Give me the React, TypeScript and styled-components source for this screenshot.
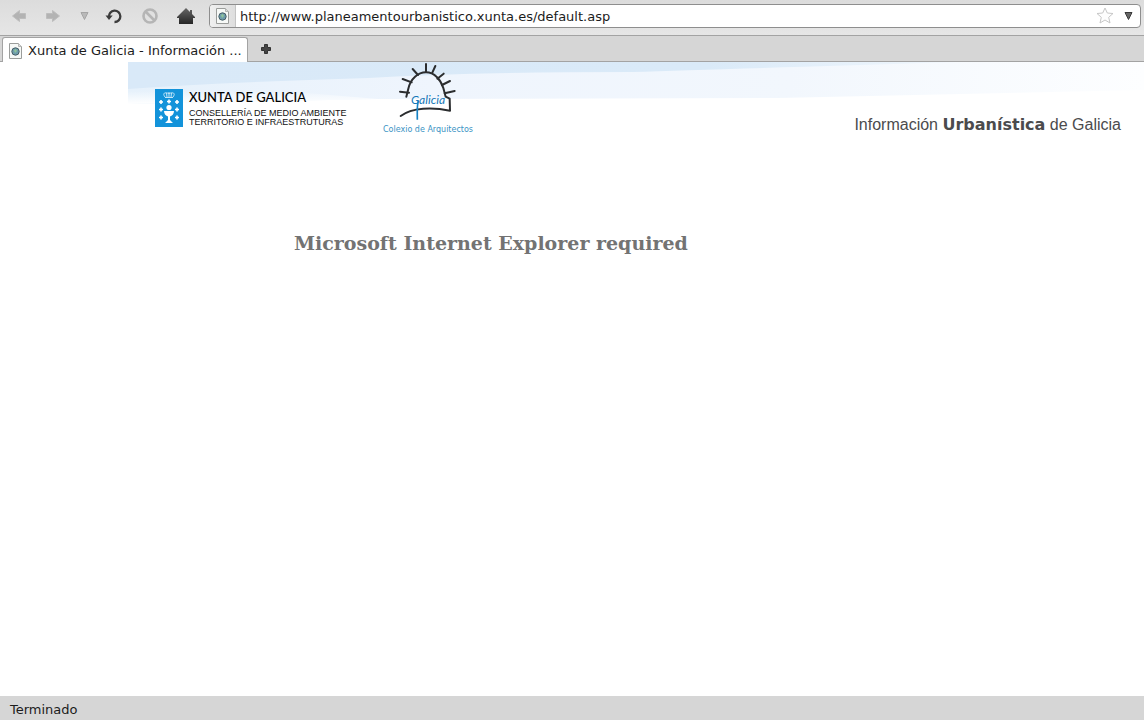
import React from 'react';
import styled, { createGlobalStyle } from 'styled-components';

const uiFont = `"DejaVu Sans", sans-serif`;

const GlobalStyle = createGlobalStyle`
  * { box-sizing: border-box; }
  body { margin: 0; background: #fff; }
`;

const Browser = styled.div`
  display: flex;
  flex-direction: column;
  min-height: 100vh;
  font: 13px/18px ${uiFont};
  color: #1c1c1c;
`;

const Toolbar = styled.nav`
  display: flex;
  align-items: center;
  height: 36px;
  padding: 0 3px 4px 4px;
  background: linear-gradient(#dcdcdc, #e6e6e6);
  border-bottom: 1px solid #a3a3a3;
`;

const ToolButton = styled.button<{ $width: number }>`
  display: flex;
  align-items: center;
  justify-content: center;
  flex: none;
  width: ${(p) => p.$width}px;
  height: 28px;
  padding: 0;
  border: 0;
  background: none;
`;

const NewTabButton = styled(ToolButton)`
  height: 24px;
`;

const AddressBar = styled.form`
  display: flex;
  flex: 1;
  align-items: center;
  height: 24px;
  margin-left: 5px;
  background: #fff;
  border: 1px solid #8e8e8e;
  border-radius: 4px;
  overflow: hidden;
`;

const SiteBadge = styled.span`
  display: flex;
  align-items: center;
  justify-content: center;
  align-self: stretch;
  width: 26px;
  background: linear-gradient(90deg, #f0f0f0, #dedede);
  border-right: 1px solid #c4c4c4;
`;

const AddressInput = styled.input`
  flex: 1;
  min-width: 0;
  height: 22px;
  padding: 2px 4px 0;
  border: 0;
  outline: 0;
  background: none;
  color: #1c1c1c;
  font: 13px/18px ${uiFont};
`;

const TabStrip = styled.div`
  display: flex;
  align-items: flex-end;
  height: 26px;
  padding-left: 2px;
  background: #d6d6d6;
  border-bottom: 1px solid #a3a3a3;
`;

const Tab = styled.button`
  display: flex;
  align-items: center;
  gap: 4px;
  width: 246px;
  height: 25px;
  margin-bottom: -1px;
  padding: 2px 4px 0 5px;
  background: #fff;
  border: 1px solid #a3a3a3;
  border-bottom: 0;
  border-radius: 3px 3px 0 0;
  color: #1c1c1c;
  font: 13px/18px ${uiFont};
  text-align: left;
`;

const TabTitle = styled.span`
  flex: 1;
  white-space: nowrap;
`;

const Page = styled.main`
  flex: 1;
  background: #fff;
`;

const Banner = styled.header`
  position: relative;
  display: flex;
  height: 76px;
  margin-left: 128px;
`;

const Sky = styled.svg`
  position: absolute;
  inset: 0;
  width: 100%;
  height: 42px;
`;

const XuntaLogo = styled.a`
  position: relative;
  display: flex;
  gap: 6px;
  width: 244px;
  padding: 27px 0 0 27px;
  color: #111;
  text-decoration: none;
  white-space: nowrap;
`;

const XuntaName = styled.strong`
  display: block;
  color: #000;
  font: 500 13px/17px Lato, sans-serif;
`;

const Department = styled.span`
  display: block;
  font: 9px/9px "Liberation Sans", sans-serif;
`;

const DepartmentLines = styled.span`
  display: block;
  padding-top: 3px;
`;

const ArchitectsLogo = styled.a`
  position: relative;
  display: flex;
  flex-direction: column;
  align-items: center;
  width: 112px;
  color: #3a93c4;
  font: 8px/12px "DejaVu Sans", sans-serif;
  text-decoration: none;
  white-space: nowrap;
`;

const SiteTitle = styled.h1`
  position: relative;
  flex: 1;
  margin: 0;
  padding: 53px 23px 0 0;
  color: #4b4b4d;
  font: 16px/20px "Liberation Sans", sans-serif;
  text-align: right;
  white-space: nowrap;
`;

const Heavy = styled.strong`
  font-family: "DejaVu Sans", sans-serif;
  font-weight: 700;
`;

const Notice = styled.h2`
  margin: 92px 0 0 294px;
  color: #737373;
  font: bold 19px/26px "DejaVu Serif", serif;
`;

const StatusBar = styled.footer`
  height: 24px;
  padding: 5px 10px 0;
  background: #d6d6d6;
`;

const SiteIcon = () => (
  <svg width="16" height="16" viewBox="0 0 16 16" aria-hidden="true">
    <path d="M1.500 .5h9l3 3v12h-12z" fill="#f7f9f7" stroke="#9b9d9b" />
    <path d="M10.500 .5v3h3" fill="#ddd" stroke="#b4b6b4" />
    <circle cx="7.500" cy="8.500" r="3.700" fill="#6f9dab" stroke="#465d66" />
    <path d="M6 7l2-1 1 2-2 2z" fill="#8fc49a" />
  </svg>
);

const Arrow = ({ forward = false }: { forward?: boolean }) => (
  <svg width="16" height="14" viewBox="0 0 16 14" aria-hidden="true">
    <path
      d={forward ? 'M1.500 4.500h6v-3l7 5.500-7 5.500v-3h-6z' : 'M14.500 4.500h-6v-3l-7 5.500 7 5.500v-3h6z'}
      fill="#b3b3b3"
      stroke="#bdbdbd"
    />
  </svg>
);

const Reload = () => (
  <svg width="18" height="18" viewBox="0 0 18 18" aria-hidden="true">
    <path d="M4 10a5.700 5.700 0 1 1 5.500 5" fill="none" stroke="#3c3c3c" strokeWidth="2.300" />
    <path d="M.500 8.500h7.200L4 13z" fill="#3c3c3c" />
  </svg>
);

const Stop = () => (
  <svg width="18" height="18" viewBox="0 0 18 18" fill="none" stroke="#b5b5b5" strokeWidth="2.600" aria-hidden="true">
    <circle cx="9" cy="9" r="6.500" />
    <path d="M4.500 4.500l9 9" />
  </svg>
);

const Home = () => (
  <svg width="20" height="18" viewBox="0 0 20 18" aria-hidden="true">
    <defs>
      <linearGradient id="home" x2="0" y2="1">
        <stop stopColor="#666" />
        <stop offset="1" stopColor="#262626" />
      </linearGradient>
    </defs>
    <path d="M10 1l4 4V3h2v4l3 3v1h-2v6H3v-6H1v-1z" fill="url(#home)" />
  </svg>
);

const Down = ({ faint = false }: { faint?: boolean }) => (
  <svg width="9" height="9" viewBox="0 0 9 9" aria-hidden="true">
    <path d="M1 1.500h7L4.500 8.500z" fill={faint ? '#b9b9b9' : '#666'} stroke={faint ? '#a5a5a5' : '#3a3a3a'} />
  </svg>
);

const Star = () => (
  <svg width="18" height="17" viewBox="0 0 18 17" aria-hidden="true">
    <path
      d="M9 1l2.300 5 5.700.500-4.300 3.800L14 16l-5-3-5 3 1.300-5.700L1 6.500 6.700 6z"
      fill="#fdfdfd"
      stroke="#c6c6c6"
      strokeLinejoin="round"
    />
  </svg>
);

const Plus = () => (
  <svg width="12" height="12" viewBox="0 0 12 12" aria-hidden="true">
    <path d="M4.500 1.500h3v3h3v3h-3v3h-3v-3h-3v-3h3z" fill="#444" stroke="#333" />
  </svg>
);

const Shield = () => (
  <svg width="28" height="38" viewBox="0 0 28 38" aria-hidden="true">
    <path d="M0 0h28v38H0z" fill="#1393da" />
    <g fill="none" stroke="#c4e6f8">
      <path d="M10 8C7 4 10 3 14 4.500c4-1.500 7-.5 4 3.500M14 3v5M11.500 4l.5 4M16.500 4l-.5 4M10 8.500h8" />
    </g>
    <path
      d="M4 13h4M6 11v4M12 12.500h4M14 10.500v4M20 13h4M22 11v4M4 20.500h4M6 18.500v4M20 20.500h4M22 18.500v4M4 28.500h4M6 26.500v4M20 28.500h4M22 26.500v4"
      stroke="#fff"
      strokeWidth="1.600"
    />
    <circle cx="14" cy="18.500" r="2.600" fill="#fff" />
    <path d="M9 22h10c0 3-2 5-4 5.500V31l3 3h-8l3-3v-3.500c-2-.5-4-2.500-4-5.500z" fill="#fff" />
  </svg>
);

const SunLogo = () => (
  <svg width="64" height="62" viewBox="6 6 192 186" role="img" aria-label="Galicia">
    <g fill="none" stroke="#2b2d2f" strokeWidth="6" strokeLinecap="round" strokeLinejoin="round">
      <path d="M37 110L43 86C50 56 72 37 96 37c25 0 44 21 52 47l7 26 12 6 1 36C116 141 54 142 20 168" />
      <path d="M96 12v24M56 27l16 18M26 57l27 10M18 95l27 3M124 18l-9 20M149 41l-19 15M168 63l-24 12M182 93l-30 7" />
    </g>
    <text x="51" y="131" fill="#1477b8" fontFamily="Lato, sans-serif" fontSize="36" fontStyle="italic">
      Galicia
    </text>
    <path d="M74 122c-6 10-4 32-4 57" fill="none" stroke="#1681c4" strokeWidth="5" />
  </svg>
);

export default function App() {
  return (
    <Browser>
      <GlobalStyle />
      <Toolbar aria-label="Navigation">
        <ToolButton $width={29} aria-label="Back"><Arrow /></ToolButton>
        <ToolButton $width={40} aria-label="Forward"><Arrow forward /></ToolButton>
        <ToolButton $width={23} aria-label="History"><Down faint /></ToolButton>
        <ToolButton $width={36} aria-label="Reload"><Reload /></ToolButton>
        <ToolButton $width={36} aria-label="Stop"><Stop /></ToolButton>
        <ToolButton $width={36} aria-label="Home"><Home /></ToolButton>
        <AddressBar>
          <SiteBadge><SiteIcon /></SiteBadge>
          <AddressInput
            aria-label="Address"
            defaultValue="http://www.planeamentourbanistico.xunta.es/default.asp"
          />
          <ToolButton $width={24} type="button" aria-label="Bookmark"><Star /></ToolButton>
          <ToolButton $width={23} type="button" aria-label="Show addresses"><Down /></ToolButton>
        </AddressBar>
      </Toolbar>
      <TabStrip>
        <Tab>
          <SiteIcon />
          <TabTitle>Xunta de Galicia - Información ...</TabTitle>
        </Tab>
        <NewTabButton $width={36} aria-label="New tab"><Plus /></NewTabButton>
      </TabStrip>
      <Page>
        <Banner>
          <Sky viewBox="0 0 1016 42" preserveAspectRatio="none" aria-hidden="true">
            <defs>
              <linearGradient id="haze">
                <stop stopColor="#e6f1fb" />
                <stop offset=".3" stopColor="#eff5fd" />
                <stop offset=".65" stopColor="#f2f7fd" />
                <stop offset="1" stopColor="#fdfeff" />
              </linearGradient>
              <linearGradient id="haze-fade" x2="0" y2="1">
                <stop offset=".5" stopColor="#fff" stopOpacity="0" />
                <stop offset="1" stopColor="#fff" />
              </linearGradient>
              <linearGradient id="blue">
                <stop stopColor="#d9e9f8" />
                <stop offset=".7" stopColor="#daeaf8" />
                <stop offset="1" stopColor="#f1f7fd" />
              </linearGradient>
            </defs>
            <path d="M0 0h1016v28L650 36 250 37 0 42z" fill="url(#haze)" />
            <path d="M0 16L250 37 0 42z" fill="url(#haze-fade)" />
            <path d="M0 0h830Q600 7 504 10 350 10 240 16 100 20 0 27z" fill="url(#blue)" />
          </Sky>
          <XuntaLogo href="#xunta">
            <Shield />
            <span>
              <XuntaName>XUNTA DE GALICIA</XuntaName>
              <DepartmentLines>
                <Department>CONSELLERÍA DE MEDIO AMBIENTE</Department>
                <Department>TERRITORIO E INFRAESTRUTURAS</Department>
              </DepartmentLines>
            </span>
          </XuntaLogo>
          <ArchitectsLogo href="#arquitectos">
            <SunLogo />
            Colexio de Arquitectos
          </ArchitectsLogo>
          <SiteTitle>
            Información <Heavy>Urbanística</Heavy> de Galicia
          </SiteTitle>
        </Banner>
        <Notice>Microsoft Internet Explorer required</Notice>
      </Page>
      <StatusBar>Terminado</StatusBar>
    </Browser>
  );
}
